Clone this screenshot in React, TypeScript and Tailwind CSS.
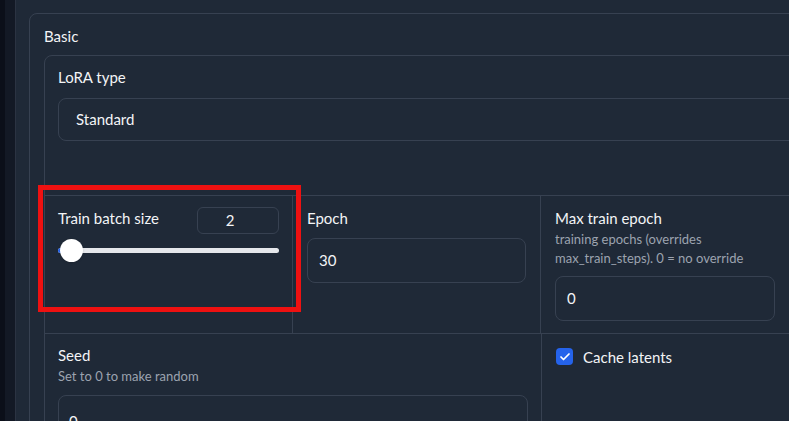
import { Check } from 'lucide-react'

const font = { fontFamily: 'Lato, "Noto Sans", sans-serif' }

function Field({ label, info, value }: { label: string; info?: string[]; value: string }) {
  return (
    <div className="flex flex-col px-[14px] pt-[12px] pb-[12px]">
      <span className="text-[15px] leading-[20px] text-[#f3f4f6]">{label}</span>
      {info && (
        <div className="mt-[2px] text-[13px] leading-[19px] text-[#9ca3af]">
          {info.map((line) => (
            <div key={line}>{line}</div>
          ))}
        </div>
      )}
      <div
        className={`${info ? 'mt-[8px]' : 'mt-[10px]'} flex h-[45px] items-center rounded-lg border border-[#374151] px-[11px] text-[15px] text-[#f3f4f6]`}
      >
        {value}
      </div>
    </div>
  )
}

export default function App() {
  return (
    <div className="flex h-[421px] w-[789px] overflow-hidden bg-[#0b0f19]" style={font}>
      <div className="w-[5px] shrink-0 bg-[#0b0f19]" />
      <div className="w-[10px] shrink-0 bg-[#131925]" />
      <div className="relative flex-1 border-l border-[#2b3342] bg-[#1f2937] pl-[13px] pt-[13px]">
        {/* Basic group */}
        <div className="w-[900px] rounded-lg border border-[#374151] pl-[14px] pt-[12px]">
          <div className="text-[15px] leading-[20px] text-[#f3f4f6]">Basic</div>

          <div className="mt-[9px] rounded-lg border border-[#374151]">
            {/* LoRA type */}
            <div className="h-[139px] px-[13px] pt-[11px]">
              <div className="text-[15px] leading-[20px] text-[#f3f4f6]">LoRA type</div>
              <div className="mt-[11px] flex h-[43px] items-center rounded-lg border border-[#374151] px-[17px] text-[15px] text-[#f3f4f6]">
                Standard
              </div>
            </div>

            {/* row 1 */}
            <div className="grid grid-cols-[247px_248px_249px_1fr] border-t border-[#374151]">
              <div className="flex flex-col px-[13px] pt-[11px]">
                <div className="flex items-start justify-between">
                  <span className="mt-[1px] text-[15px] leading-[20px] text-[#f3f4f6]">Train batch size</span>
                  <div className="flex h-[27px] w-[82px] items-center justify-center rounded-md border border-[#374151] pr-[16px] text-[15px] text-[#f3f4f6]">
                    2
                  </div>
                </div>
                <div className="relative mt-[14px] h-[5px] w-[221px] rounded-full bg-[#e5e7eb]">
                  <div className="absolute left-0 top-0 h-[5px] w-[6px] rounded-l-full bg-[#2563eb]" />
                  <div className="absolute left-[2px] top-[-9px] h-[23px] w-[23px] rounded-full bg-white shadow" />
                </div>
              </div>
              <div className="border-l border-[#374151]">
                <Field label="Epoch" value="30" />
              </div>
              <div className="border-l border-[#374151]">
                <Field label="Max train epoch" info={['training epochs (overrides', 'max_train_steps). 0 = no override']} value="0" />
              </div>
              <div />
            </div>

            {/* row 2 */}
            <div className="grid grid-cols-[496px_249px_1fr] border-t border-[#374151]">
              <div className="flex flex-col px-[13px] pt-[11px]">
                <span className="text-[15px] leading-[20px] text-[#f3f4f6]">Seed</span>
                <span className="mt-[2px] text-[13px] leading-[19px] text-[#9ca3af]">Set to 0 to make random</span>
                <div className="mt-[9px] flex h-[45px] items-start rounded-lg border border-[#374151] px-[10px] pt-[15px] text-[15px] leading-[20px] text-[#f3f4f6]">
                  0
                </div>
              </div>
              <div className="flex items-start gap-[10px] border-l border-[#374151] px-[14px] pt-[14px]">
                <div className="flex h-[17px] w-[17px] items-center justify-center rounded-[4px] bg-[#2563eb]">
                  <Check className="h-[12px] w-[12px] text-white" strokeWidth={3.5} />
                </div>
                <span className="text-[15px] leading-[18px] text-[#f3f4f6]">Cache latents</span>
              </div>
              <div />
            </div>
          </div>
        </div>

        {/* highlight annotation */}
        <div className="absolute left-[22px] top-[185px] h-[127px] w-[263px] border-[5px] border-[#ee1111]" />
      </div>
    </div>
  )
}
